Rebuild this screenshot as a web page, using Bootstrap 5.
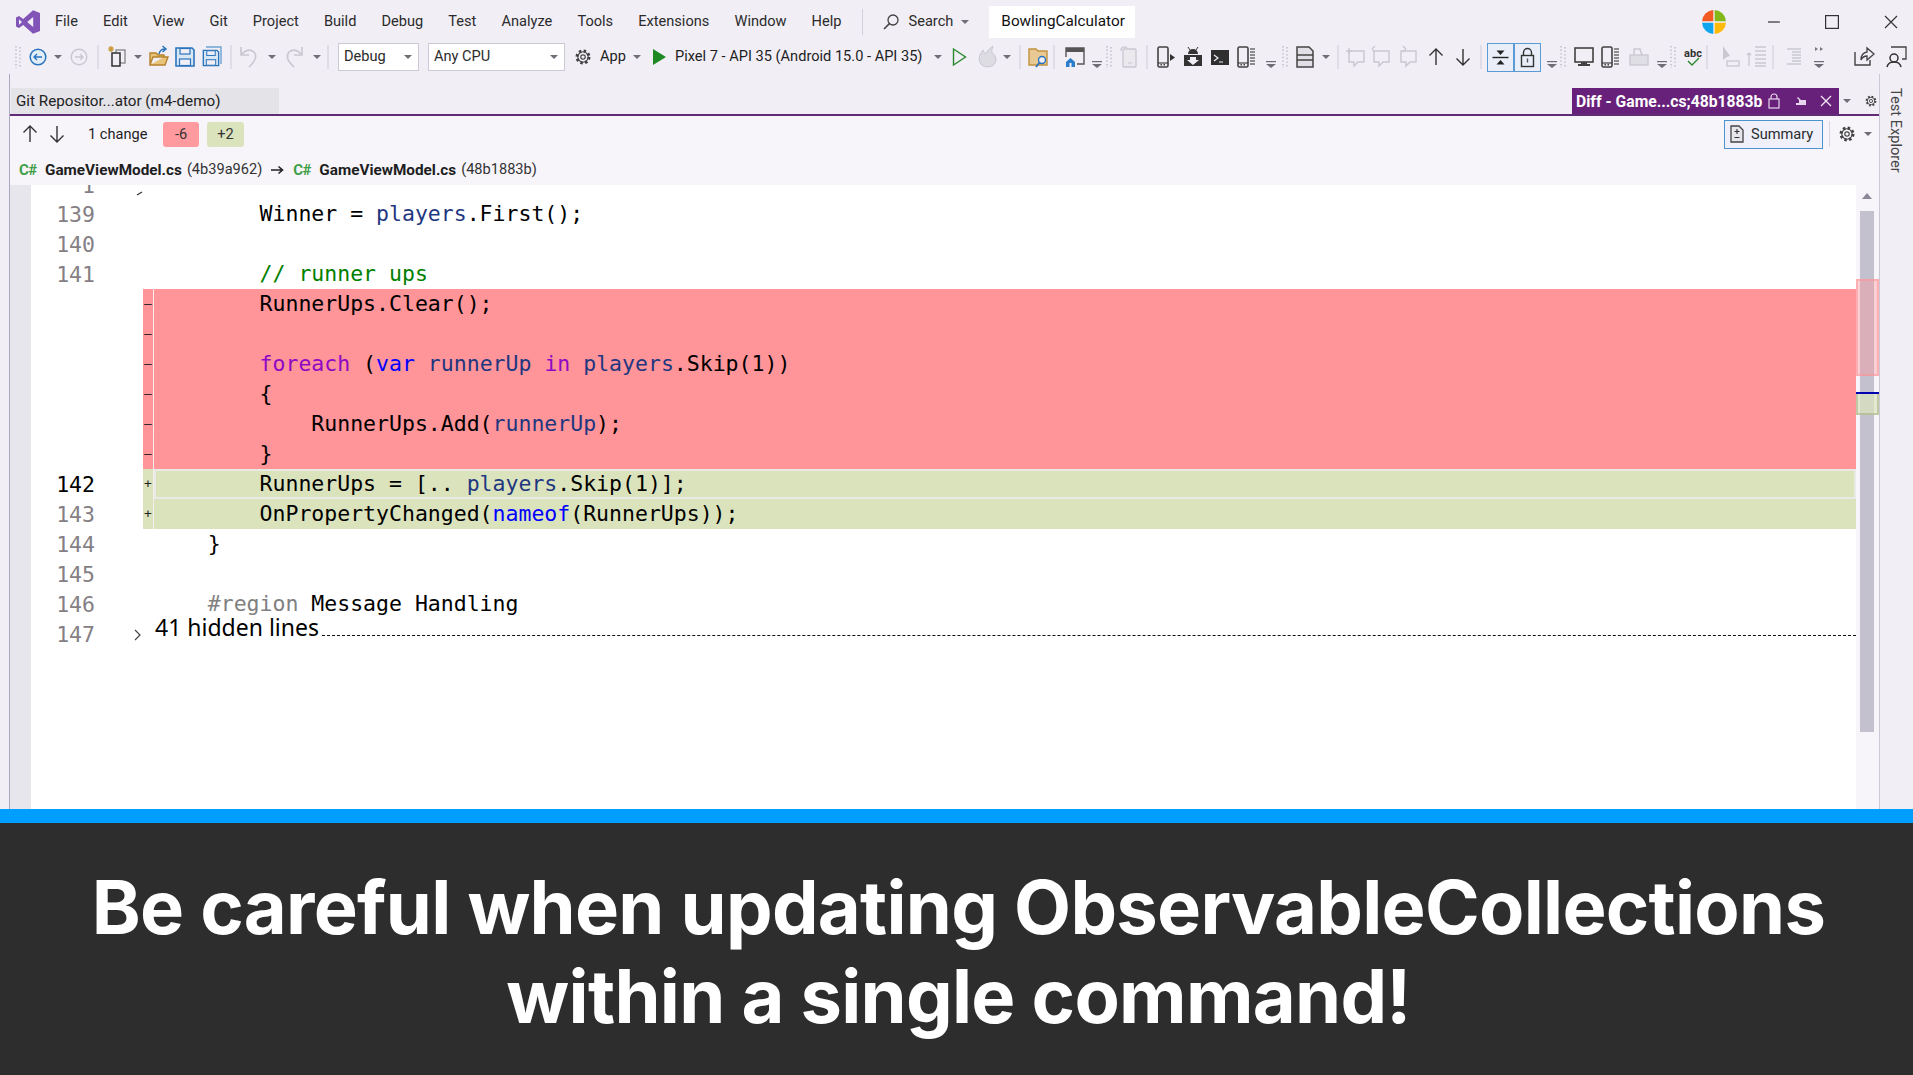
<!doctype html>
<html lang="en">
<head>
<meta charset="utf-8">
<title>BowlingCalculator - Diff</title>
<link href="https://cdn.jsdelivr.net/npm/bootstrap@5.3.0/dist/css/bootstrap.min.css" rel="stylesheet">
<style>
html,body{height:1075px;overflow:hidden}
body{background:#f1eef6;font-family:Roboto,"Liberation Sans",sans-serif;font-size:14.6px;color:#1e1e1e;line-height:1.2}
svg{overflow:visible;flex:0 0 auto;display:block}
.shell{height:809px}
.titlerow{height:40px;padding:3px 0 0 16px}
.vslogo{margin-right:15px}
.menu{gap:25.1px}
.menu .nav-link{padding:0;color:#2b2b2b;font-size:14.6px}
.tsep{width:1px;height:26px;background:#d2cfdb;margin:0 20px 0 20px}
.srch{margin-left:10px;color:#2b2b2b}
.srch-caret{margin-left:8px}
.solution{height:32px;margin-left:20px;padding:0 10px 0 12px;background:#fff;color:#111;font-size:15.3px}
.win{padding-right:16px}
.copilot-gap{margin-left:41px}
.win-max{margin-left:45px}
.win-close{margin-left:46px}
.toolrow{height:34px;padding-left:18px}
.combo{height:28px;background:#fff;border:1px solid #cdcad8;padding:0 6px 0 5px;color:#2b2b2b}
.c-debug{width:81px;margin-right:9px}
.c-cpu{width:137px;margin-right:18px}
.t-app{width:37px}
.t-pixel{width:263px;white-space:nowrap}
.tog{width:27px;height:29px;background:#e9eef9;border:1.5px solid #5a9bd5}
.panel{width:1880px;padding-left:9px}
.pinner{border-left:1px solid #aba6c2;border-right:1px solid #cbc8d6}
.tabs{height:40px;padding-top:14px;margin-left:-1px;margin-right:-1px;padding-left:2px}
.tab-git{width:268px;height:26px;background:#e4e3e8;padding:0 5px;color:#222;font-size:15.2px}
.tab-diff{width:267px;height:26px;background:#68217a;color:#fff;font-weight:700;font-size:15.7px;padding-left:4px;white-space:nowrap}
.t-diff-name{width:188px;padding-top:2px}
.tabgear{width:9px}
.purp{height:2px;background:#5f2c75}
.difftb{height:36px;background:#f7f5fa}
.difftb .t-change{width:75px;padding-top:2px}
.up-first{margin-left:20px}
.chip{width:36px;height:25px;border-radius:3px;color:#333;font-weight:400;font-size:14.6px;padding:0;display:flex;align-items:center;justify-content:center}
.chip-del{background:#ff9a9e;margin-right:8px}
.chip-add{background:#dbe3bd;width:37px}
.sumbtn{width:99px;height:29px;padding:0 0 0 5px;border:1px solid #4c94cf;border-radius:0;background:#eff0fa;color:#2b2b2b;font-size:14.6px;gap:7px}
.sumlabel{padding-top:2px}
.sumsep{width:1px;height:26px;background:#d9d6e0;margin:0 17px 0 6px}
.pathbar{height:33px;background:#f7f5fa;padding:3px 0 0 9px;color:#333}
.csh{color:#3f9e46;font-weight:700;font-size:15px;letter-spacing:-.5px;width:26px}
.fname{font-weight:700;color:#1e1e1e;margin-right:5px;font-size:15.3px}
.arrowbox{margin:0 9px 0 9px}
.editor{min-height:0}
.margin{width:21px;background:#e7e6ec}
.codebox{background:#fff;font-family:"DejaVu Sans Mono","Liberation Mono",monospace;font-size:21.5px;color:#000;min-width:0}
.ln{height:30px;white-space:pre;line-height:32px}
.partial{height:14px;overflow:hidden;line-height:1.2}
.num{width:64px;text-align:right;color:#857f85;flex:0 0 auto}
.num-cur{color:#000}
.fold{width:48px;flex:0 0 auto}
.mk{width:11px;flex:0 0 auto;border-right:1px solid #f4eeee;text-align:center;font-size:13px;line-height:29px;color:#222}
.code{flex:1 1 auto;padding-left:2px;line-height:30.5px}
.del{background:#ff9499}
.add{background:#dbe3bd}
.cur .code{box-shadow:inset 0 0 0 2px #e9e9e6}
.kw{color:#0000ff}.ctl{color:#8f08c4}.loc{color:#1f377f}.cm{color:#008000}.pp{color:#808080}
.hid{font-family:"Noto Sans",Roboto,sans-serif;font-size:23px;line-height:16px;align-self:flex-start;padding-left:1px;white-space:nowrap;color:#000}
.dash{flex:1 1 auto;border-bottom:1.5px dashed #111;margin:0 0 13px 3px;align-self:flex-end}
.vscroll{width:23px;background:#f7f5fa;padding-top:26px}
.thumb{width:14px;height:521px;margin-left:4px;background:#c3c1cd}
.sup{left:6px;top:8px}
.m-red{left:0;top:94px;width:23px;height:97px;background:rgba(255,148,153,.38);border:2px solid rgba(255,148,153,.55)}
.m-blue{left:0;top:207px;width:23px;height:2px;background:#0000b0}
.m-green{left:0;top:209px;width:23px;height:21px;background:rgba(219,227,189,.7);border:2px solid rgba(150,165,110,.45);border-top:0}
.rail{width:33px;padding-top:14px;padding-left:6px}
.railtxt{writing-mode:vertical-rl;color:#444;font-size:14.6px;white-space:nowrap}
.bluebar{height:14px;background:#009eff}
.banner{height:252px;background:#2d2d2d;color:#fff;font-family:Inter,"Noto Sans",sans-serif;font-weight:700;font-size:74px;line-height:89px;padding:40px 0 0 4px;letter-spacing:-.7px}
</style>
</head>
<body class="d-flex flex-column">
<svg width="0" height="0" class="position-absolute">
<defs>
<g id="cr"><polygon points="-4,-2 4,-2 0,2" fill="#6f6d75"/></g>
<g id="dr"><rect x="-5" y="4" width="10" height="1.2" fill="#6f6d75"/><polygon points="-5,7 5,7 0,11" fill="#6f6d75"/></g>
<g id="gp"><line x1="-2" x2="-2" y1="-11" y2="11" stroke="#bcbac6" stroke-width="1.4" stroke-dasharray="1.4 2.2"/><line x1="2" x2="2" y1="-10" y2="11" stroke="#bcbac6" stroke-width="1.4" stroke-dasharray="1.4 2.2"/></g>
<g id="sp"><line x1="0" x2="0" y1="-12" y2="12" stroke="#cfccd8"/></g>
<g id="gear"><circle r="6" fill="none" stroke="#424242" stroke-width="3" stroke-dasharray="2.4 2.3"/><circle r="5.2" fill="none" stroke="#424242" stroke-width="1.1"/><circle r="2.2" fill="none" stroke="#424242" stroke-width="1.2"/></g>
<g id="up"><path d="M0 8V-8M-6.5 -1.5L0 -8L6.5 -1.5" fill="none" stroke="#333" stroke-width="1.4"/></g>
<g id="dn"><path d="M0 -8V8M-6.5 1.5L0 8L6.5 1.5" fill="none" stroke="#333" stroke-width="1.4"/></g>
<g id="bub"><path d="M-8 -6H7V5H1L-3 9V5H-8Z" fill="none" stroke="#c9c7d1" stroke-width="1.4"/></g>
<g id="flop"><path d="M-9 -9H7L9 -7V9H-9Z" fill="#d9e6f5" stroke="#2a74bd" stroke-width="1.6"/><rect x="-5" y="-8.5" width="10" height="5.5" fill="#f1eef6" stroke="#2a74bd" stroke-width="1.2"/><rect x="-5.5" y="2" width="11" height="6.5" fill="#f1eef6" stroke="#2a74bd" stroke-width="1.2"/></g>
<g id="phoneside"><rect x="-6" y="-10" width="10" height="20" rx="1.5" fill="none" stroke="#424242" stroke-width="1.6"/><line x1="-6" x2="4" y1="6" y2="6" stroke="#424242" stroke-width="1.2"/><rect x="-3.5" y="7" width="1.5" height="1.5" fill="#424242"/><rect x="-.5" y="7" width="1.5" height="1.5" fill="#424242"/></g>
<g id="pane"><line x1="6" x2="11" y1="-8" y2="-8" stroke="#555" stroke-width="1.3"/><line x1="6" x2="11" y1="-5" y2="-5" stroke="#555" stroke-width="1.3"/><line x1="6" x2="11" y1="-2" y2="-2" stroke="#555" stroke-width="1.3"/><line x1="6" x2="11" y1="1" y2="1" stroke="#555" stroke-width="1.3"/><line x1="6" x2="11" y1="4" y2="4" stroke="#555" stroke-width="1.3"/><line x1="6" x2="11" y1="7" y2="7" stroke="#555" stroke-width="1.3"/></g>
</defs>
</svg>

<div class="shell d-flex flex-column">
  <!-- title bar -->
  <div class="titlerow d-flex align-items-center">
    <svg class="vslogo" width="24" height="24" viewBox="0 0 24 24"><path d="M17 0.3L24 3V21L17 23.7L7.2 15L3 18L0 16.5V7.5L3 6L7.2 9Z" fill="#8254b8"/><path d="M3 9.2L6 12L3 14.8ZM17.2 7L11.2 12L17.2 17Z" fill="#f1eef6"/></svg>
    <nav class="nav menu flex-nowrap">
      <a class="nav-link" href="#">File</a><a class="nav-link" href="#">Edit</a><a class="nav-link" href="#">View</a><a class="nav-link" href="#">Git</a><a class="nav-link" href="#">Project</a><a class="nav-link" href="#">Build</a><a class="nav-link" href="#">Debug</a><a class="nav-link" href="#">Test</a><a class="nav-link" href="#">Analyze</a><a class="nav-link" href="#">Tools</a><a class="nav-link" href="#">Extensions</a><a class="nav-link" href="#">Window</a><a class="nav-link" href="#">Help</a>
    </nav>
    <span class="tsep"></span>
    <svg width="16" height="18" viewBox="0 0 16 18"><circle cx="10" cy="7" r="5" fill="none" stroke="#424242" stroke-width="1.3"/><line x1="6.4" y1="10.6" x2="1" y2="16" stroke="#424242" stroke-width="1.5"/></svg>
    <span class="srch">Search</span>
    <svg class="srch-caret" width="8" height="8" viewBox="-4 -4 8 8"><use href="#cr"/></svg>
    <span class="solution d-flex align-items-center">BowlingCalculator</span>
    <div class="ms-auto d-flex align-items-center win">
      <svg width="26" height="26" viewBox="-13 -13 26 26"><path d="M-.7 -.7V-12A12 12 0 0 0 -12 -.7Z" fill="#f25a22"/><path d="M.7 -.7V-12A12 12 0 0 1 12 -.7Z" fill="#84b816"/><path d="M-.7 .7V12A12 12 0 0 1 -12 .7Z" fill="#0ea5ee"/><path d="M.7 .7V12A12 12 0 0 0 12 .7Z" fill="#ffba08"/></svg>
      <svg class="copilot-gap" width="12" height="12" viewBox="0 0 12 12"><line x1="0" x2="12" y1="6" y2="6" stroke="#333" stroke-width="1.2"/></svg>
      <svg class="win-max" width="14" height="14" viewBox="0 0 14 14"><rect x=".6" y=".6" width="12.8" height="12.8" fill="none" stroke="#333" stroke-width="1.2"/></svg>
      <svg class="win-close" width="12" height="12" viewBox="0 0 12 12"><path d="M0 0L12 12M12 0L0 12" stroke="#333" stroke-width="1.2"/></svg>
    </div>
  </div>

  <!-- main toolbar -->
  <div class="toolrow d-flex align-items-center">
    <svg width="20" height="24" viewBox="0 -12 20 24"><use href="#gp"/></svg>
    <svg width="20" height="24" viewBox="0 -12 20 24"><circle r="7.8" fill="#e3edf8" stroke="#2a74bd" stroke-width="1.5"/><path d="M4 0H-4M-1 -3L-4 0L-1 3" fill="none" stroke="#2a74bd" stroke-width="1.4"/></svg>
    <svg width="21" height="24" viewBox="0 -12 21 24"><use href="#cr"/></svg>
    <svg width="19" height="24" viewBox="0 -12 19 24"><circle r="7.8" fill="none" stroke="#c9c7d1" stroke-width="1.4"/><path d="M-4 0H4M1 -3L4 0L1 3" fill="none" stroke="#c9c7d1" stroke-width="1.3"/></svg>
    <svg width="20" height="24" viewBox="0 -12 20 24"><use href="#sp"/></svg>
    <svg width="20" height="24" viewBox="0 -12 20 24"><rect x="-2" y="-7" width="9" height="13" fill="#f1eef6" stroke="#8a8a8a" stroke-width="1.4"/><rect x="-6" y="-4" width="8" height="13" fill="#f1eef6" stroke="#2e2e2e" stroke-width="1.5"/><path d="M-7 -11V-5M-10 -8H-4M-9 -10L-5 -6M-5 -10L-9 -6" stroke="#c99a3a" stroke-width="1.2"/></svg>
    <svg width="21" height="24" viewBox="0 -12 21 24"><use href="#cr"/></svg>
    <svg width="26" height="24" viewBox="0 -12 26 24"><path d="M-9 8V-4H-3L-1 -2H5V0H-6L-9 8H6L9 0H5" fill="#e8c37a" stroke="#b5832c" stroke-width="1.4"/><path d="M0 -3Q1 -8 6 -8M3.5 -11L7 -8L3.5 -5" fill="none" stroke="#2a74bd" stroke-width="1.5"/></svg>
    <svg width="27" height="24" viewBox="0 -12 27 24"><use href="#flop"/></svg>
    <svg width="19" height="24" viewBox="0 -12 19 24"><path d="M-6 -10H9V7" fill="none" stroke="#6ea3d4" stroke-width="1.4"/><g transform="translate(-1,1) scale(.85)"><use href="#flop"/></g></svg>
    <svg width="18" height="24" viewBox="0 -12 18 24"><use href="#sp"/></svg>
    <svg width="23" height="24" viewBox="0 -12 23 24"><path d="M-8 -10V-2H0M-8 -2Q-1 -10 5 -5Q10 1 0 10" fill="none" stroke="#c9c7d1" stroke-width="1.6"/></svg>
    <svg width="22" height="24" viewBox="0 -12 22 24"><use href="#cr"/></svg>
    <svg width="23" height="24" viewBox="0 -12 23 24"><path d="M8 -10V-2H0M8 -2Q1 -10 -5 -5Q-10 1 0 10" fill="none" stroke="#c9c7d1" stroke-width="1.6"/></svg>
    <svg width="11" height="24" viewBox="0 -12 11 24"><use href="#cr"/></svg>
    <svg width="10" height="24" viewBox="0 -12 10 24"><use href="#sp"/></svg>
    <div class="combo c-debug d-flex align-items-center justify-content-between"><span>Debug</span><svg width="8" height="8" viewBox="-4 -4 8 8"><use href="#cr"/></svg></div>
    <div class="combo c-cpu d-flex align-items-center justify-content-between"><span>Any CPU</span><svg width="8" height="8" viewBox="-4 -4 8 8"><use href="#cr"/></svg></div>
    <svg width="17" height="24" viewBox="0 -12 17 24"><use href="#gear"/></svg>
    <span class="t-app">App</span>
    <svg width="22" height="24" viewBox="0 -12 22 24"><use href="#cr"/></svg>
    <svg width="16" height="24" viewBox="0 -12 16 24"><polygon points="-6,-8 7,0 -6,8" fill="#1f8a24"/></svg>
    <span class="t-pixel">Pixel 7 - API 35 (Android 15.0 - API 35)</span>
    <svg width="21" height="24" viewBox="0 -12 21 24"><use href="#cr"/></svg>
    <svg width="29" height="24" viewBox="0 -12 29 24"><polygon points="-5.5,-8 6.5,0 -5.5,8" fill="none" stroke="#2b8a30" stroke-width="1.4"/></svg>
    <svg width="19" height="24" viewBox="0 -12 19 24"><path d="M5 -11Q-1 -7 -2 -3Q-5 -5 -5 -7Q-9 -2 -9 2Q-8 10 0 10Q8 9 8 2Q8 -2 4 -4Q3 -7 5 -11Z" fill="#dedce3" stroke="#c9c7d1"/></svg>
    <svg width="13" height="24" viewBox="0 -12 13 24"><use href="#cr"/></svg>
    <svg width="18" height="24" viewBox="0 -12 18 24"><use href="#sp"/></svg>
    <svg width="16" height="24" viewBox="0 -12 16 24"><path d="M-9 8V-8H-2L0 -6H9V8Z" fill="#e8c993" stroke="#c2923f" stroke-width="1.4"/><circle cx="4" cy="3" r="3.5" fill="#f1eef6" stroke="#2a74bd" stroke-width="1.4"/><line x1="1.5" y1="5.5" x2="-2" y2="10" stroke="#2a74bd" stroke-width="1.8"/></svg>
    <svg width="21" height="24" viewBox="0 -12 21 24"><use href="#sp"/></svg>
    <svg width="22" height="24" viewBox="0 -12 22 24"><path d="M-9 0V-9H9V7H2" fill="#f1eef6" stroke="#555" stroke-width="1.4"/><rect x="-9" y="-9" width="18" height="4" fill="#555"/><path d="M-9 5L-4.500 1L0 5V10H-9Z" fill="#2a7ccc"/><rect x="-5.500" y="6" width="2" height="4" fill="#f1eef6"/></svg>
    <svg width="12" height="24" viewBox="0 -12 12 24"><use href="#dr"/></svg>
    <svg width="20" height="24" viewBox="0 -12 20 24"><use href="#gp"/></svg>
    <svg width="18" height="24" viewBox="0 -12 18 24"><rect x="-6" y="-8" width="13" height="18" rx="1" fill="#ebe9ee" stroke="#c9c7d1" stroke-width="1.3"/><path d="M-8 -6A3.5 3.5 0 0 1 -2 -9" fill="none" stroke="#c9c7d1" stroke-width="1.3"/><line x1="-1" x2="3" y1="6" y2="6" stroke="#c9c7d1"/></svg>
    <svg width="19" height="24" viewBox="0 -12 19 24"><use href="#sp"/></svg>
    <svg width="27" height="24" viewBox="0 -12 27 24"><g transform="translate(-2,0)"><use href="#phoneside"/></g><polygon points="4,-3 9,0.5 4,4" fill="#333"/></svg>
    <svg width="27" height="24" viewBox="0 -12 27 24"><path d="M-9 -2H9V9H-9Z" fill="#333"/><path d="M-5 -3A5 5 0 0 1 5 -3Z" fill="#333"/><path d="M-5 -10L-3 -7M5 -10L3 -7" stroke="#333"/><path d="M-3 0H3V3H6L0 8L-6 3H-3Z" fill="#f1eef6"/></svg>
    <svg width="27" height="24" viewBox="0 -12 27 24"><rect x="-9" y="-7" width="18" height="15" fill="#2f2f2f"/><path d="M-6 -2L-2 1L-6 4M-1 5H3" fill="none" stroke="#f1eef6" stroke-width="1.2"/></svg>
    <svg width="24" height="24" viewBox="0 -12 24 24"><g transform="translate(-3,0)"><use href="#phoneside"/><use href="#pane"/></g></svg>
    <svg width="14" height="24" viewBox="0 -12 14 24"><use href="#dr"/></svg>
    <svg width="20" height="24" viewBox="0 -12 20 24"><use href="#gp"/></svg>
    <svg width="21" height="24" viewBox="0 -12 21 24"><path d="M-8 -10H4L8 -6V10H-8Z" fill="#e2e0e6" stroke="#444" stroke-width="1.5"/><path d="M-8 -2H8M-8 3H8" stroke="#444" stroke-width="1.5"/></svg>
    <svg width="12" height="24" viewBox="0 -12 12 24"><use href="#cr"/></svg>
    <svg width="19" height="24" viewBox="0 -12 19 24"><use href="#sp"/></svg>
    <svg width="25" height="24" viewBox="0 -12 25 24"><use href="#bub"/><path d="M-11 -6H-5M-8 -9V-3" stroke="#c9c7d1" stroke-width="1.3"/></svg>
    <svg width="27" height="24" viewBox="0 -12 27 24"><use href="#bub"/><path d="M-10 -8L-7 -11M-10 -8L-7 -5" stroke="#c9c7d1" stroke-width="1.3" fill="none"/></svg>
    <svg width="27" height="24" viewBox="0 -12 27 24"><use href="#bub"/><path d="M-3 -8L0 -11M-3 -8L0 -5" stroke="#c9c7d1" stroke-width="1.3" fill="none" transform="rotate(180 -3 -8)"/></svg>
    <svg width="27" height="24" viewBox="0 -12 27 24"><use href="#up"/></svg>
    <svg width="18" height="24" viewBox="0 -12 18 24"><use href="#dn"/></svg>
    <svg width="6" height="24" viewBox="0 -12 6 24"><use href="#sp"/></svg>
    <div class="tog d-flex align-items-center justify-content-center"><svg width="17" height="17" viewBox="-8.5 -8.5 17 17"><rect x="-8" y="-.7" width="16" height="1.4" fill="#222"/><polygon points="-4,-7 4,-7 0,-2.5" fill="#222"/><polygon points="-4,7 4,7 0,2.5" fill="#222"/></svg></div>
    <div class="tog d-flex align-items-center justify-content-center"><svg width="15" height="19" viewBox="-7.5 -9.5 15 19"><rect x="-6" y="-2" width="12" height="11" fill="none" stroke="#333" stroke-width="1.4"/><path d="M-4 -2V-5A4 4 0 0 1 4 -5V-2" fill="none" stroke="#333" stroke-width="1.4"/><rect x="-.7" y="1" width="1.4" height="4" fill="#555"/></svg></div>
    <svg width="11" height="24" viewBox="-11 -12 11 24"></svg>
    <svg width="11" height="24" viewBox="0 -12 11 24"><use href="#dr"/></svg>
    <svg width="21" height="24" viewBox="0 -12 21 24"><use href="#gp"/></svg>
    <svg width="26" height="24" viewBox="0 -12 26 24"><rect x="-9" y="-9" width="18" height="14" fill="none" stroke="#424242" stroke-width="1.6"/><path d="M-3 5H3V7H6V9H-6V7H-3Z" fill="#424242"/></svg>
    <svg width="29" height="24" viewBox="0 -12 29 24"><g transform="translate(-2,0)"><use href="#phoneside"/><use href="#pane"/></g></svg>
    <svg width="23" height="24" viewBox="0 -12 23 24"><rect x="-9" y="-2" width="18" height="10" fill="#e0dee5" stroke="#c9c7d1" stroke-width="1.3"/><path d="M-5 -2V-8H1L3 -2" fill="none" stroke="#c9c7d1" stroke-width="1.5"/></svg>
    <svg width="11" height="24" viewBox="0 -12 11 24"><use href="#dr"/></svg>
    <svg width="20" height="24" viewBox="0 -12 20 24"><use href="#gp"/></svg>
    <svg width="14" height="24" viewBox="0 -12 14 24"><text x="0" y="0" text-anchor="middle" font-family="Roboto,sans-serif" font-weight="700" font-size="11" fill="#333">abc</text><path d="M-5 4L-1 8L6 1" fill="none" stroke="#2b8a30" stroke-width="1.4"/></svg>
    <svg width="23" height="24" viewBox="0 -12 23 24"><use href="#sp"/></svg>
    <svg width="28" height="24" viewBox="0 -12 28 24"><path d="M-7 -11V3L-3 0L0 -1Z" fill="#c9c7d1"/><rect x="-3" y="4" width="12" height="5" fill="none" stroke="#c9c7d1" stroke-width="1.3"/></svg>
    <svg width="15" height="24" viewBox="0 -12 15 24"><path d="M-9 9V-4M-9 -4L-11 -2M-9 -4L-7 -2" stroke="#c9c7d1" fill="none" stroke-width="1.3"/><path d="M-3 -10H8M-3 -6H8M-3 -2H8M-3 2H8M-3 6H8M-3 9H8" stroke="#c9c7d1" stroke-width="1.3"/></svg>
    <svg width="22" height="24" viewBox="0 -12 22 24"><use href="#sp"/></svg>
    <svg width="24" height="24" viewBox="0 -12 24 24"><path d="M-8 -8H6M-3 -5H6M-3 -2H6M-3 1H6M-3 4H6M-8 7H6" stroke="#c9c7d1" stroke-width="1.3"/></svg>
    <svg width="45" height="24" viewBox="0 -12 45 24"><path d="M-4 -10V-6L-1 -8ZM1 -10V-6L4 -8Z" fill="#777"/><use href="#dr"/></svg>
    <svg width="32" height="24" viewBox="0 -12 32 24"><path d="M-9 -5V8H6V3" fill="none" stroke="#424242" stroke-width="1.4"/><path d="M-3 3Q-3 -4 3 -5V-9L10 -3L3 3V-1Q-1 -1 -3 3Z" fill="#f1eef6" stroke="#424242" stroke-width="1.3"/></svg>
    <svg width="16" height="24" viewBox="0 -12 16 24"><path d="M-5 -10H10V2H6" fill="none" stroke="#424242" stroke-width="1.3"/><circle cx="-2" cy="1" r="4" fill="#f1eef6" stroke="#333" stroke-width="1.5"/><path d="M-9 10Q-8 5 -2 5Q4 5 5 10" fill="none" stroke="#333" stroke-width="1.5"/></svg>
  </div>

  <div class="d-flex flex-grow-1 editor">
    <div class="panel d-flex flex-column">
      <div class="pinner d-flex flex-column flex-grow-1 editor">
        <!-- doc tabs -->
        <div class="tabs d-flex align-items-start">
          <div class="tab-git d-flex align-items-center">Git Repositor...ator (m4-demo)</div>
          <div class="ms-auto tab-diff d-flex align-items-center">
            <span class="t-diff-name">Diff - Game...cs;48b1883b</span>
            <svg width="27" height="16" viewBox="-5 -8 27 16"><rect x="0" y="-2" width="10" height="9" fill="none" stroke="#e7d5ec" stroke-width="1.2"/><path d="M2 -2V-4A3 3 0 0 1 8 -4V-2" fill="none" stroke="#e7d5ec" stroke-width="1.2"/></svg>
            <svg width="25" height="16" viewBox="-5 -8 25 16"><path d="M0 4H10V-1H5L2 -4L1 -3L3 -1V2H0Z" fill="#e7d5ec"/></svg>
            <svg width="20" height="16" viewBox="-5 -8 20 16"><path d="M0 -5L10 5M10 -5L0 5" stroke="#f3e9f6" stroke-width="1.3"/></svg>
          </div>
          <svg width="32" height="26" viewBox="-8 -13 32 26"><use href="#cr"/></svg>
          <svg class="tabgear" height="26" viewBox="0 -13 9 26"><g transform="scale(.72)"><use href="#gear"/></g></svg>
        </div>
        <div class="purp"></div>
        <!-- diff toolbar -->
        <div class="difftb d-flex align-items-center">
          <svg class="up-first" width="27" height="24" viewBox="0 -12 27 24"><use href="#up"/></svg>
          <svg width="31" height="24" viewBox="0 -12 31 24"><use href="#dn"/></svg>
          <span class="t-change">1 change</span>
          <span class="badge chip chip-del">-6</span>
          <span class="badge chip chip-add">+2</span>
          <button class="btn sumbtn ms-auto d-flex align-items-center" type="button">
            <svg width="14" height="18" viewBox="0 0 14 18"><path d="M1 1H9L13 5V17H1Z" fill="#e7e6ec" stroke="#444" stroke-width="1.3"/><path d="M7 4V9M4.500 6.500H9.500M4.500 12.500H9.500" stroke="#333" stroke-width="1.1"/></svg>
            <span class="sumlabel">Summary</span>
          </button>
          <span class="sumsep"></span>
          <svg width="21" height="24" viewBox="0 -12 21 24"><use href="#gear"/></svg>
          <svg width="11" height="24" viewBox="0 -12 11 24"><use href="#cr"/></svg>
        </div>
        <!-- path bar -->
        <div class="pathbar d-flex align-items-center">
          <span class="csh">C#</span><span class="fname">GameViewModel.cs</span><span>(4b39a962)</span>
          <svg class="arrowbox" width="13" height="10" viewBox="0 0 13 10"><path d="M0 5H11M7.500 1.500L11.500 5L7.500 8.500" fill="none" stroke="#222" stroke-width="1.6"/></svg>
          <span class="csh">C#</span><span class="fname">GameViewModel.cs</span><span>(48b1883b)</span>
        </div>
        <!-- editor -->
        <div class="editor d-flex flex-grow-1">
          <div class="margin"></div>
          <div class="codebox flex-grow-1 d-flex flex-column">
            <div class="ln partial d-flex align-items-end"><span class="num">1</span><span class="fold"><svg width="48" height="6" viewBox="0 0 48 6"><path d="M42 2L47 -1" stroke="#333" stroke-width="1.2"/></svg></span></div>
            <div class="ln d-flex"><span class="num">139</span><span class="fold"></span><span class="mk border-0"></span><span class="code">        Winner = <span class="loc">players</span>.First();</span></div>
            <div class="ln d-flex"><span class="num">140</span></div>
            <div class="ln d-flex"><span class="num">141</span><span class="fold"></span><span class="mk border-0"></span><span class="code cm">        // runner ups</span></div>
            <div class="ln d-flex"><span class="num"></span><span class="fold"></span><span class="mk del">–</span><span class="code del">        RunnerUps.Clear();</span></div>
            <div class="ln d-flex"><span class="num"></span><span class="fold"></span><span class="mk del">–</span><span class="code del"> </span></div>
            <div class="ln d-flex"><span class="num"></span><span class="fold"></span><span class="mk del">–</span><span class="code del">        <span class="ctl">foreach</span> (<span class="kw">var</span> <span class="loc">runnerUp</span> <span class="ctl">in</span> <span class="loc">players</span>.Skip(1))</span></div>
            <div class="ln d-flex"><span class="num"></span><span class="fold"></span><span class="mk del">–</span><span class="code del">        {</span></div>
            <div class="ln d-flex"><span class="num"></span><span class="fold"></span><span class="mk del">–</span><span class="code del">            RunnerUps.Add(<span class="loc">runnerUp</span>);</span></div>
            <div class="ln d-flex"><span class="num"></span><span class="fold"></span><span class="mk del">–</span><span class="code del">        }</span></div>
            <div class="ln cur d-flex"><span class="num num-cur">142</span><span class="fold"></span><span class="mk add">+</span><span class="code add">        RunnerUps = [.. <span class="loc">players</span>.Skip(1)];</span></div>
            <div class="ln d-flex"><span class="num">143</span><span class="fold"></span><span class="mk add">+</span><span class="code add">        OnPropertyChanged(<span class="kw">nameof</span>(RunnerUps));</span></div>
            <div class="ln d-flex"><span class="num">144</span><span class="fold"></span><span class="mk border-0"></span><span class="code">    }</span></div>
            <div class="ln d-flex"><span class="num">145</span></div>
            <div class="ln d-flex"><span class="num">146</span><span class="fold"></span><span class="mk border-0"></span><span class="code">    <span class="pp">#region</span> Message Handling</span></div>
            <div class="ln d-flex"><span class="num">147</span><span class="fold"><svg width="48" height="30" viewBox="0 0 48 30"><path d="M40 11L45 16L40 21" fill="none" stroke="#444" stroke-width="1.2"/></svg></span><span class="mk border-0"></span><span class="hid">41 hidden lines</span><span class="dash"></span></div>
          </div>
          <div class="vscroll position-relative">
            <div class="thumb"></div>
            <svg class="position-absolute sup" width="10" height="7" viewBox="0 0 10 7"><polygon points="5,0 10,6 0,6" fill="#8a8899"/></svg>
            <div class="position-absolute m-red"></div>
            <div class="position-absolute m-green"></div>
            <div class="position-absolute m-blue"></div>
          </div>
        </div>
      </div>
    </div>
    <div class="rail"><span class="railtxt">Test Explorer</span></div>
  </div>
</div>
<div class="bluebar"></div>
<div class="banner text-center">Be careful when updating ObservableCollections<br>within a single command!</div>
</body>
</html>
